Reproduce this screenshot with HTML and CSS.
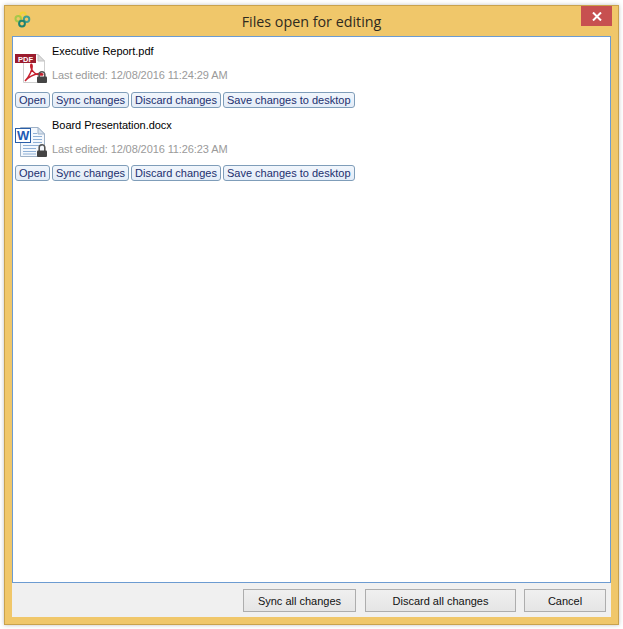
FILE: index.html
```html
<!DOCTYPE html>
<html lang="en">
<head>
    <meta charset="UTF-8">
    <title>Files open for editing</title>
    <link rel="stylesheet" href="styles.css">
</head>
<body>

<div class="window">
    <div class="titlebar">
        <svg class="app-logo" width="17" height="17" viewBox="0 0 17 17">
            <circle cx="9" cy="4.2" r="2.7" fill="none" stroke="#f2d338" stroke-width="2"/>
            <circle cx="4.2" cy="7.8" r="2.7" fill="none" stroke="#a5c84a" stroke-width="2"/>
            <circle cx="12.6" cy="8.2" r="2.7" fill="none" stroke="#3f9f95" stroke-width="2"/>
            <circle cx="8" cy="12.6" r="2.9" fill="none" stroke="#1f8370" stroke-width="2"/>
        </svg>
        <div class="title">Files open for editing</div>
        <div class="close-btn">
            <svg width="10" height="9" viewBox="0 0 10 9"><path d="M1 .5 L9 8.5 M9 .5 L1 8.5" stroke="#fff" stroke-width="2" fill="none"/></svg>
        </div>
    </div>

    <div class="file-list">
        <div class="file">
            <div class="file-head">
                <svg class="file-icon" width="34" height="36" viewBox="0 0 34 36">
                    <path d="M8.5 2.5 H23 L29.5 9 V30.5 H8.5 Z" fill="#fff" stroke="#cfcfcf"/>
                    <path d="M23 2.5 V9 H29.5 Z" fill="#dcdcdc" stroke="#c4c4c4"/>
                    <rect x="0" y="2" width="21" height="9" fill="#9b1c2e"/>
                    <text x="3" y="9.6" class="pdf-label">PDF</text>
                    <path d="M10 29 C14 25 18 17 17 13 C16 11 15 13.5 16.5 17 C18.5 21 22 23.5 27 23 C29 22.5 27 21 24 21.5 C19.5 22.2 13.5 25 10 29 Z" fill="none" stroke="#c5202e" stroke-width="1.5"/>
                    <path d="M24.2 25 V22.5 A2.8 2.8 0 0 1 29.8 22.5 V25" fill="none" stroke="#555" stroke-width="1.6"/>
                    <rect x="22" y="24.5" width="10" height="6.5" rx="1" fill="#444"/>
                </svg>
                <div class="file-info">
                    <div class="file-name">Executive Report.pdf</div>
                    <div class="file-date">Last edited: 12/08/2016 11:24:29 AM</div>
                </div>
            </div>
            <div class="file-actions">
                <button class="link-btn">Open</button>
                <button class="link-btn">Sync changes</button>
                <button class="link-btn">Discard changes</button>
                <button class="link-btn">Save changes to desktop</button>
            </div>
        </div>

        <div class="file">
            <div class="file-head">
                <svg class="file-icon" width="34" height="36" viewBox="0 0 34 36">
                    <path d="M5.5 1.5 H23 L29.5 8 V30.5 H5.5 Z" fill="#f4f8fd" stroke="#9fb2c8"/>
                    <path d="M23 1.5 V8 H29.5 Z" fill="#d5e1ee" stroke="#9fb2c8"/>
                    <path d="M8 19.5 H27 M8 22.5 H21 M8 25.5 H21 M8 28 H21 M18 7.5 H22 M18 10.5 H27 M18 13.5 H27 M18 16.5 H27" stroke="#8fb0d6" stroke-width="1"/>
                    <rect x="0.5" y="2.5" width="15" height="14" fill="#fff" stroke="#2a5ea8"/>
                    <text x="2" y="14" class="word-label">W</text>
                    <path d="M24.2 25 V21.5 A2.8 2.8 0 0 1 29.8 21.5 V25" fill="none" stroke="#555" stroke-width="1.6"/>
                    <rect x="22" y="24.5" width="10" height="6.5" rx="1" fill="#444"/>
                </svg>
                <div class="file-info">
                    <div class="file-name">Board Presentation.docx</div>
                    <div class="file-date">Last edited: 12/08/2016 11:26:23 AM</div>
                </div>
            </div>
            <div class="file-actions">
                <button class="link-btn">Open</button>
                <button class="link-btn">Sync changes</button>
                <button class="link-btn">Discard changes</button>
                <button class="link-btn">Save changes to desktop</button>
            </div>
        </div>
    </div>

    <div class="footer">
        <button class="dlg-btn btn-sync">Sync all changes</button>
        <button class="dlg-btn btn-discard">Discard all changes</button>
        <button class="dlg-btn btn-cancel">Cancel</button>
    </div>
</div>

</body>
</html>
```

FILE: styles.css
```css
html, body { height: 100%; }
body { margin: 0; padding: 5px 4px 4px 4px; box-sizing: border-box; background: #fff; font-family: "Liberation Sans", Arial, sans-serif; color: #000; overflow: hidden; }

.window { height: 100%; box-sizing: border-box; background: #f0c76a; border: 1px solid #c9a24d; box-shadow: 0 0 4px rgba(0,0,0,0.25); padding: 0 7px 7px 7px; display: flex; flex-direction: column; }

/* Title bar */
.titlebar { height: 30px; flex: none; display: flex; align-items: center; position: relative; }
.app-logo { margin: 0 0 3px 2px; }
.title { position: absolute; left: 0; right: 0; top: 7px; text-align: center; font-family: "Open Sans", sans-serif; font-size: 14.3px; line-height: 18px; color: #2f2a20; }
.close-btn { position: absolute; right: -1px; top: 0; width: 31px; height: 20px; background: #c75050; display: flex; align-items: center; justify-content: center; }

/* File list */
.file-list { flex: 1; background: #fff; border: 1px solid #6c9bd1; padding: 4px 2px 0 2px; }
.file { margin-bottom: 7px; }
.file-head { display: flex; height: 49px; }
.file + .file .file-head { height: 48px; }
.file-icon { flex: none; margin-top: 11px; }
.file-info { padding: 3px 0 0 3px; }
.file-name { font-size: 11px; line-height: 14px; letter-spacing: -0.03px; }
.file-date { font-size: 11px; line-height: 14px; color: #9a9a9a; margin-top: 10px; letter-spacing: -0.1px; }

.pdf-label { font-family: "Liberation Sans", Arial, sans-serif; font-size: 7.5px; font-weight: bold; fill: #fff; }
.word-label { font-family: "Liberation Sans", Arial, sans-serif; font-size: 13px; font-weight: bold; fill: #1f5bb5; }

.file-actions { display: flex; gap: 2px; margin-top: 2px; }
.link-btn { height: 16px; padding: 0 3px; border: 1px solid #7f9db9; border-radius: 3px; background: linear-gradient(#f1f6fc, #e3ecf8); color: #1c2f6e; font-family: "Liberation Sans", Arial, sans-serif; font-size: 11px; line-height: 14px; }

/* Footer buttons */
.footer { height: 34px; flex: none; background: #f0f0f0; display: flex; justify-content: flex-end; align-items: flex-start; padding: 6px 5px 0 0; box-sizing: border-box; }
.dlg-btn { height: 23px; border: 1px solid #adadad; background: linear-gradient(#f0f0f0, #e5e5e5); font-family: "Liberation Sans", Arial, sans-serif; font-size: 11px; color: #111; padding: 0; }
.btn-sync { width: 113px; margin-right: 9px; }
.btn-discard { width: 151px; margin-right: 8px; }
.btn-cancel { width: 82px; }
```
